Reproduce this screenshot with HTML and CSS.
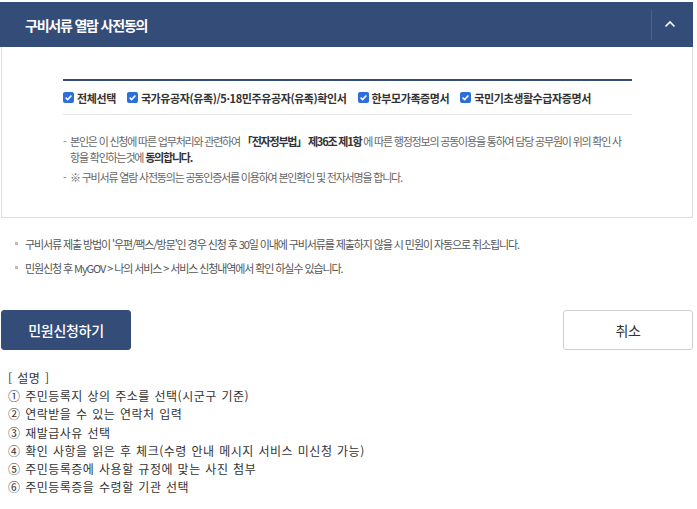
FILE: index.html
```html
<!DOCTYPE html>
<html lang="ko">
<head>
<meta charset="utf-8">
<link rel="stylesheet" href="styles.css">
</head>
<body>
<div class="page">
  <section class="panel">
    <header class="panel-head">
      <h2 class="panel-title">구비서류 열람 사전동의</h2>
      <button class="toggle" type="button" aria-label="접기">
        <svg width="12" height="8" viewBox="0 0 12 8"><path d="M1.5 6.5 L6 2 L10.5 6.5" fill="none" stroke="#fff" stroke-width="1.6"/></svg>
      </button>
    </header>
    <div class="panel-body">
      <div class="checks">
        <label class="chk"><span class="box"><svg width="11" height="11" viewBox="0 0 11 11"><rect width="11" height="11" rx="2" fill="#2c6fd9"/><path d="M2.6 5.6 L4.6 7.6 L8.4 3.4" fill="none" stroke="#fff" stroke-width="1.5"/></svg></span>전체선택</label>
        <label class="chk"><span class="box"><svg width="11" height="11" viewBox="0 0 11 11"><rect width="11" height="11" rx="2" fill="#2c6fd9"/><path d="M2.6 5.6 L4.6 7.6 L8.4 3.4" fill="none" stroke="#fff" stroke-width="1.5"/></svg></span>국가유공자(유족)/5·18민주유공자(유족)확인서</label>
        <label class="chk"><span class="box"><svg width="11" height="11" viewBox="0 0 11 11"><rect width="11" height="11" rx="2" fill="#2c6fd9"/><path d="M2.6 5.6 L4.6 7.6 L8.4 3.4" fill="none" stroke="#fff" stroke-width="1.5"/></svg></span>한부모가족증명서</label>
        <label class="chk"><span class="box"><svg width="11" height="11" viewBox="0 0 11 11"><rect width="11" height="11" rx="2" fill="#2c6fd9"/><path d="M2.6 5.6 L4.6 7.6 L8.4 3.4" fill="none" stroke="#fff" stroke-width="1.5"/></svg></span>국민기초생활수급자증명서</label>
      </div>
      <ul class="notes">
        <li>본인은 이 신청에 따른 업무처리와 관련하여 <strong>「전자정부법」 제36조 제1항</strong> 에 따른 행정정보의 공동이용을 통하여 담당 공무원이 위의 확인 사<br>항을 확인하는것에 <strong>동의합니다.</strong></li>
        <li>※ 구비서류 열람 사전동의는 공동인증서를 이용하여 본인확인 및 전자서명을 합니다.</li>
      </ul>
    </div>
  </section>

  <ul class="info">
    <li>구비서류 제출 방법이 '우편/팩스/방문'인 경우 신청 후 30일 이내에 구비서류를 제출하지 않을 시 민원이 자동으로 취소됩니다.</li>
    <li>민원신청 후 MyGOV &gt; 나의 서비스 &gt; 서비스 신청내역에서 확인 하실수 있습니다.</li>
  </ul>

  <div class="actions">
    <button class="btn btn-primary" type="button">민원신청하기</button>
    <button class="btn btn-ghost" type="button">취소</button>
  </div>

  <div class="desc">
    <p>[ 설명 ]</p>
    <p>① 주민등록지 상의 주소를 선택(시군구 기준)</p>
    <p>② 연락받을 수 있는 연락처 입력</p>
    <p>③ 재발급사유 선택</p>
    <p>④ 확인 사항을 읽은 후 체크(수령 안내 메시지 서비스 미신청 가능)</p>
    <p>⑤ 주민등록증에 사용할 규정에 맞는 사진 첨부</p>
    <p>⑥ 주민등록증을 수령할 기관 선택</p>
  </div>
</div>
</body>
</html>
```

FILE: styles.css
```css
* { box-sizing: border-box; }
html, body { margin: 0; padding: 0; background: #fff; }
body {
  font-family: "Noto Sans CJK KR", "Noto Sans", sans-serif;
  color: #333;
}
.page {
  padding: 2px 4px 0 1px;
}
.panel-head {
  height: 45px;
  background: #344c78;
  display: flex;
  align-items: center;
  margin-left: -1px;
  padding-left: 25px;
}
.panel-title {
  flex: 1;
  margin: 0;
  color: #fff;
  font-size: 14px;
  font-weight: 700;
  letter-spacing: -1.2px;
}
.toggle {
  width: 42px;
  height: 30px;
  border: 0;
  border-left: 1px solid #4b6291;
  background: transparent;
  display: flex;
  align-items: center;
  justify-content: center;
  padding: 0 6px 2px 0;
}
.panel-body {
  border: 1px solid #dcdcdc;
  border-top: 0;
  padding: 32px 60px 28px 61px;
}
.checks {
  border-top: 2px solid #344c78;
  border-bottom: 1px solid #e6e6e6;
  height: 36px;
  display: flex;
  align-items: center;
  gap: 11px;
}
.chk {
  display: flex;
  align-items: center;
  gap: 3px;
  font-size: 11px;
  font-weight: 700;
  color: #333;
  letter-spacing: -0.4px;
}
.box { display: flex; }
.notes {
  list-style: none;
  margin: 0;
  padding: 18px 0 0;
}
.notes li {
  position: relative;
  padding-left: 7px;
  font-size: 11px;
  line-height: 16px;
  color: #666;
  letter-spacing: -1.2px;
  margin-bottom: 4px;
  white-space: nowrap;
}
.notes li::before {
  content: "-";
  position: absolute;
  left: 0;
  top: 0;
  color: #888;
}
.notes strong { color: #333; font-weight: 700; }
.info {
  list-style: none;
  margin: 0;
  padding: 14px 0 0 14px;
}
.info li {
  position: relative;
  padding-left: 10px;
  font-size: 11px;
  line-height: 24px;
  color: #555;
  letter-spacing: -1.1px;
}
.info li::before {
  content: "";
  position: absolute;
  left: 0;
  top: 10px;
  width: 3px;
  height: 3px;
  background: #bbb;
}
.actions {
  display: flex;
  justify-content: space-between;
  padding-top: 30px;
}
.btn {
  width: 130px;
  height: 40px;
  border-radius: 3px;
  font-family: inherit;
  font-size: 14px;
  letter-spacing: -0.3px;
  padding: 0;
}
.btn-primary {
  background: #344c78;
  border: 1px solid #344c78;
  color: #fff;
  font-weight: 500;
}
.btn-ghost {
  background: #fff;
  border: 1px solid #cfcfcf;
  color: #333;
}
.desc {
  padding: 19px 0 0 7px;
  font-size: 12px;
  color: #333;
  line-height: 18.2px;
  letter-spacing: 0.5px;
  word-spacing: 0.8px;
}
.desc p { margin: 0; }
```
